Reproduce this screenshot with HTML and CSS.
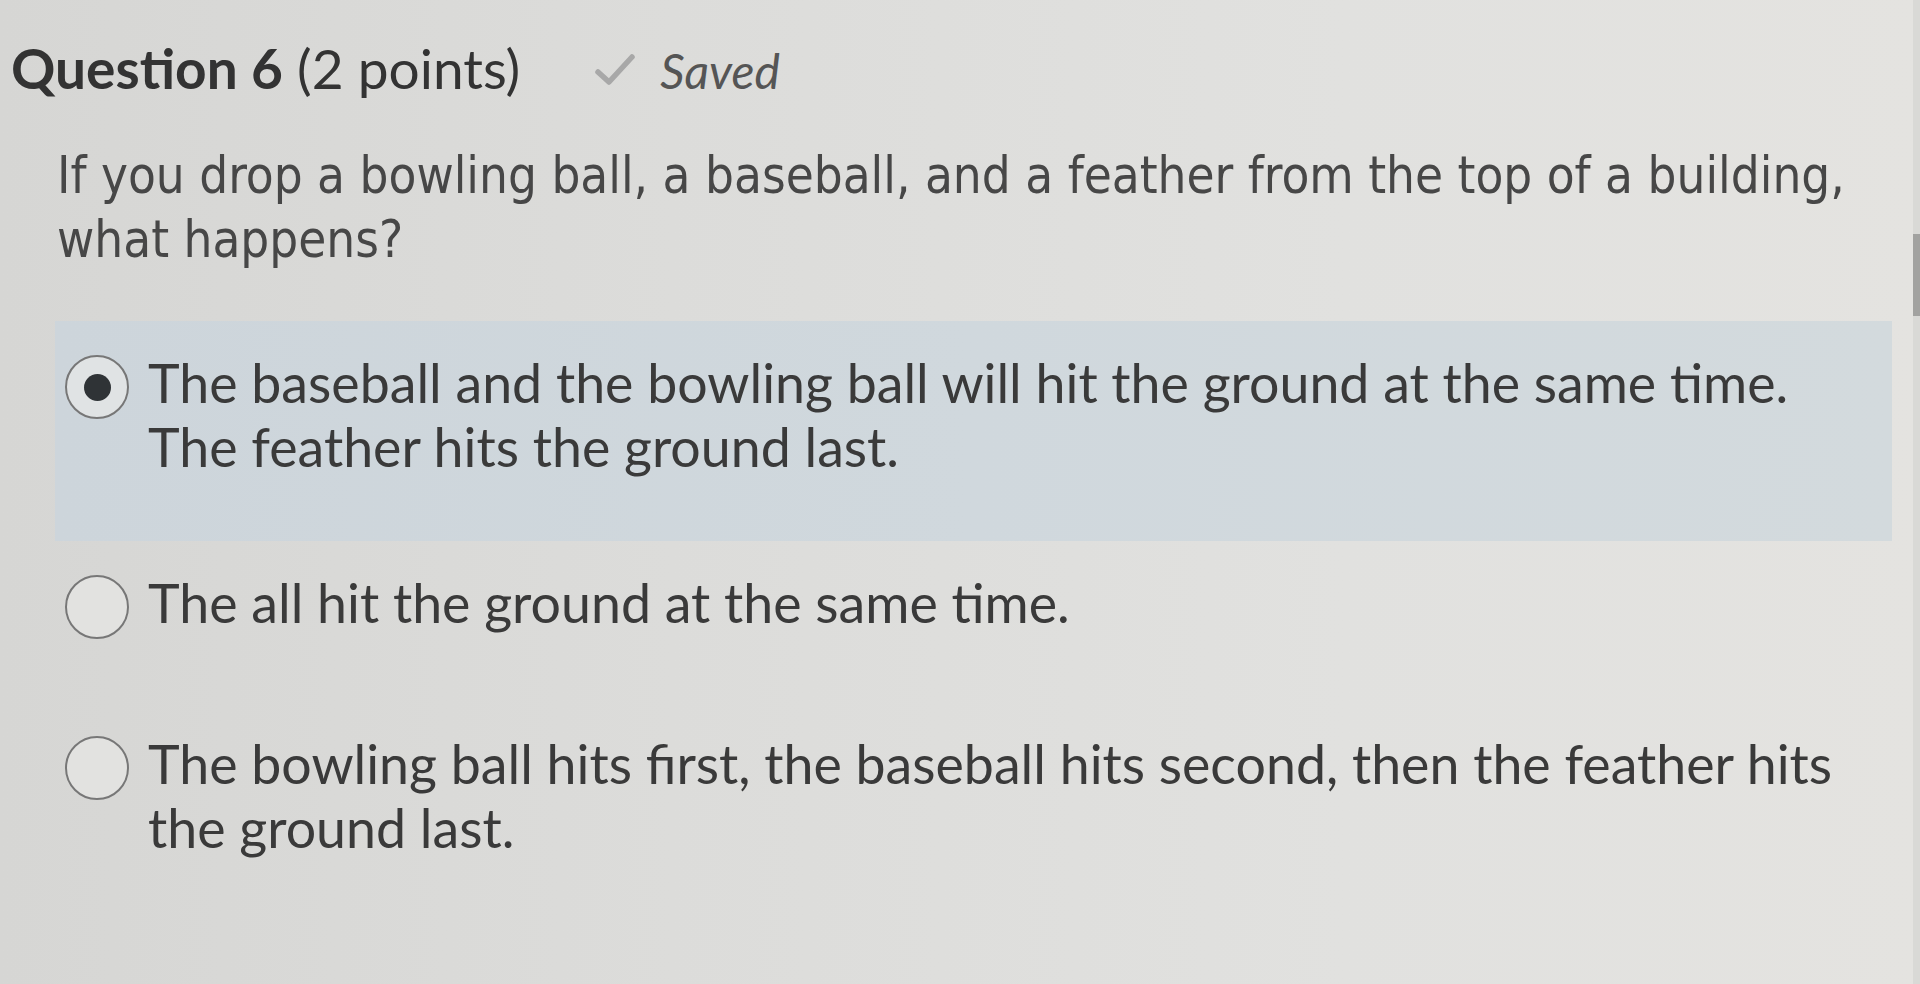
FILE: index.html
```html
<!DOCTYPE html>
<html lang="en">
<head>
<meta charset="utf-8">
<title>Question 6</title>
<link rel="stylesheet" href="styles.css">
</head>
<body>
<div class="screen">
  <div class="page">
    <div class="header">
      <h2 class="title"><span class="q-bold">Question 6</span> (2 points)</h2>
      <span class="saved">
        <svg class="check" viewBox="0 0 42 34" width="42" height="34" aria-hidden="true">
          <path d="M4 19 L15 29 L38 4" fill="none" stroke="#a8a8a8" stroke-width="5.5" stroke-linecap="round" stroke-linejoin="round"/>
        </svg>
        <span class="saved-text">Saved</span>
      </span>
    </div>
    <p class="prompt">If you drop a bowling ball, a baseball, and a feather from the top of a building, what happens?</p>
    <div class="options">
      <label class="option selected">
        <span class="radio"><span class="dot"></span></span>
        <span class="opt-text">The baseball and the bowling ball will hit the ground at the same time. The feather hits the ground last.</span>
      </label>
      <label class="option">
        <span class="radio"></span>
        <span class="opt-text">The all hit the ground at the same time.</span>
      </label>
      <label class="option">
        <span class="radio"></span>
        <span class="opt-text">The bowling ball hits first, the baseball hits second, then the feather hits the ground last.</span>
      </label>
    </div>
  </div>
  <div class="edge"><div class="edge-thumb"></div></div>
</div>
</body>
</html>
```

FILE: styles.css
```css
html, body {
  margin: 0;
  padding: 0;
  height: 100%;
}
body {
  background: linear-gradient(90deg, #d6d6d4 0%, #dcdcda 35%, #e1e1df 70%, #e4e3e0 100%);
  color: #383838;
  overflow: hidden;
}
.screen {
  display: flex;
  height: 100%;
}
.page {
  flex: 1;
  padding: 36px 0 0 0;
  box-sizing: border-box;
}
.edge {
  flex: none;
  width: 7px;
  background: #d9d9d6;
  padding-top: 234px;
  box-sizing: border-box;
}
.edge-thumb {
  height: 82px;
  background: #a2a2a0;
}
.header {
  display: flex;
  align-items: baseline;
  gap: 74px;
  padding-left: 11px;
  height: 64px;
}
.title {
  margin: 0;
  font-family: Lato, "Liberation Sans", sans-serif;
  font-weight: 400;
  font-size: 55px;
  line-height: 64px;
  color: #333;
}
.q-bold { font-weight: 700; }
.saved {
  display: inline-flex;
  align-items: baseline;
  gap: 24px;
}
.check {
  align-self: center;
  transform: translateY(-1px);
}
.saved-text {
  font-family: Lato, "Liberation Sans", sans-serif;
  font-style: italic;
  font-size: 48px;
  line-height: 64px;
  color: #555;
}
.prompt {
  margin: 44px 0 0 57px;
  font-family: "DejaVu Sans Condensed", "DejaVu Sans", sans-serif;
  font-size: 50.7px;
  line-height: 64px;
  color: #474747;
  max-width: 1830px;
}
.options {
  margin: 49px 0 0 55px;
  width: 1837px;
}
.option {
  display: flex;
  align-items: flex-start;
  gap: 19px;
  padding: 29px 30px 63px 10px;
}
.option.selected {
  background: linear-gradient(90deg, #cdd5db 0%, #d0d8dd 50%, #d3dadd 100%);
}
.radio {
  flex: none;
  width: 60px;
  height: 60px;
  margin-top: 5px;
  border: 2px solid #777;
  border-radius: 50%;
  background: #e2e2e0;
  display: flex;
  align-items: center;
  justify-content: center;
}
.selected .radio { background: #e0e3e4; }
.dot {
  width: 27px;
  height: 27px;
  border-radius: 50%;
  background: #2f3336;
}
.opt-text {
  font-family: Lato, "Liberation Sans", sans-serif;
  font-size: 53.7px;
  line-height: 64px;
  color: #3a3a3a;
}
```
